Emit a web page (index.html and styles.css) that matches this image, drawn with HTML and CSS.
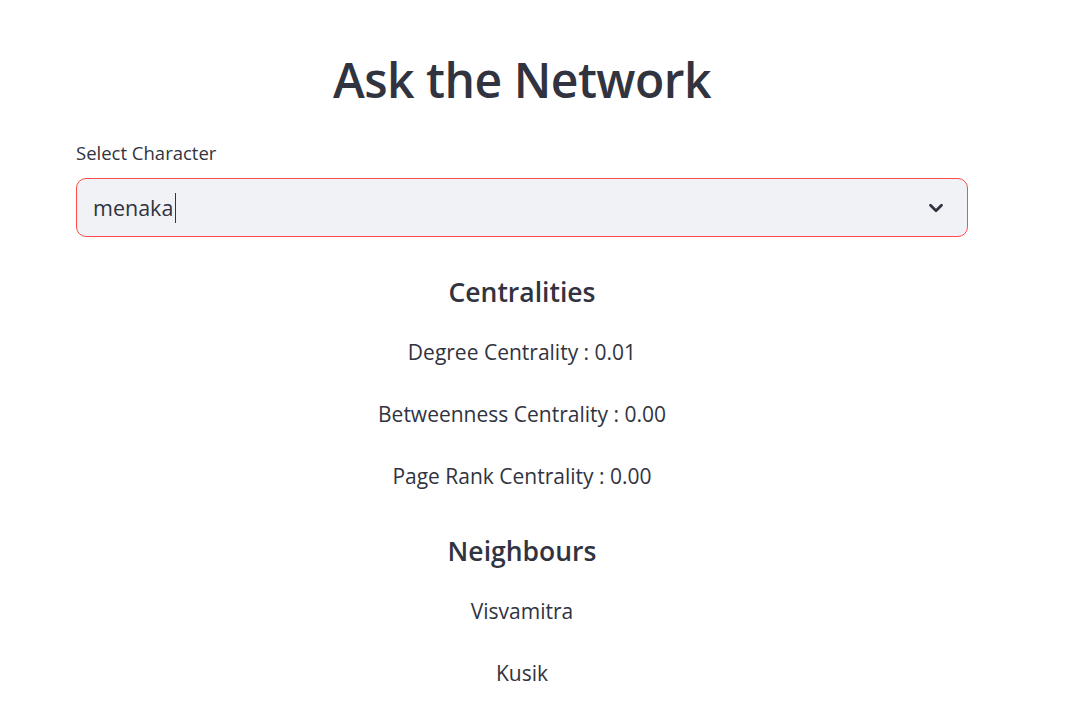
FILE: index.html
```html
<!DOCTYPE html>
<html lang="en">
<head>
<meta charset="utf-8">
<title>Ask the Network</title>
<link rel="stylesheet" href="styles.css">
</head>
<body>
<main class="app">
  <h1 class="title">Ask the Network</h1>
  <div class="field">
    <label class="field-label">Select Character</label>
    <div class="select">
      <span class="select-value">menaka<span class="caret"></span></span>
      <svg class="chevron" width="16" height="16" viewBox="0 0 24 24" aria-hidden="true">
        <path d="M6 9l6 6 6-6" fill="none" stroke="#31333f" stroke-width="3" stroke-linecap="round" stroke-linejoin="round"/>
      </svg>
    </div>
  </div>
  <h3 class="section">Centralities</h3>
  <p class="line">Degree Centrality : 0.01</p>
  <p class="line">Betweenness Centrality : 0.00</p>
  <p class="line">Page Rank Centrality : 0.00</p>
  <h3 class="section section-2">Neighbours</h3>
  <p class="line">Visvamitra</p>
  <p class="line">Kusik</p>
</main>
</body>
</html>
```

FILE: styles.css
```css
html, body {
  margin: 0;
  padding: 0;
  background: #ffffff;
}
body {
  font-family: "Open Sans", "Noto Sans", sans-serif;
  color: #31333f;
  overflow: hidden;
}
.app {
  width: 892px;
  margin-left: 76px;
  padding-top: 44px;
}
.title {
  margin: 0;
  text-align: center;
  font-size: 48px;
  font-weight: 600;
  line-height: 72px;
  letter-spacing: -0.5px;
}
.field {
  margin-top: 25px;
}
.field-label {
  display: block;
  font-size: 18.5px;
  line-height: 24px;
  height: 24px;
  margin-bottom: 13px;
}
.select {
  box-sizing: border-box;
  height: 59px;
  background: #f0f2f6;
  border: 1px solid #ff4b4b;
  border-radius: 10px;
  display: flex;
  align-items: center;
  justify-content: space-between;
  padding: 0 20px 0 16px;
}
.select-value {
  font-size: 21.5px;
  display: flex;
  align-items: center;
}
.caret {
  display: inline-block;
  width: 1px;
  height: 30px;
  background: #31333f;
  margin-left: 2px;
}
.chevron {
  width: 22px;
  height: 22px;
}
.section {
  margin: 37px 0 0;
  text-align: center;
  font-size: 26.5px;
  font-weight: 600;
  line-height: 36px;
}
.section-2 {
  margin-top: 41px;
}
.line {
  margin: 0;
  text-align: center;
  font-size: 21px;
  line-height: 32px;
  margin-top: 30px;
}
.section + .line {
  margin-top: 26px;
}
```
